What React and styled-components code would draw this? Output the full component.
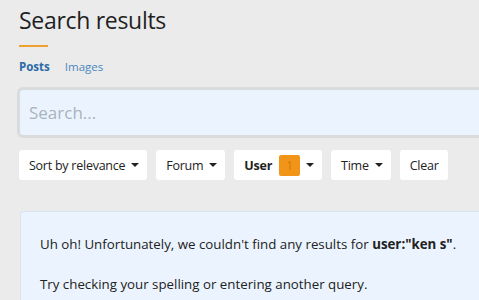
import React from "react";
import styled, { createGlobalStyle } from "styled-components";

const GlobalStyle = createGlobalStyle`
  html, body {
    margin: 0;
    background: #ebebeb;
    font-family: "Open Sans", "Noto Sans", sans-serif;
    overflow: hidden;
  }
`;

const Page = styled.div`
  padding: 4px 0 0 19px;
  width: 479px;
  height: 300px;
  box-sizing: border-box;
  overflow: hidden;
`;

const Title = styled.h1`
  margin: 0;
  font-weight: 400;
  font-size: 23px;
  letter-spacing: -0.3px;
  color: #1f1f1f;
  line-height: 32px;
`;

const Accent = styled.div`
  width: 29px;
  height: 2px;
  background: #f0a030;
  margin-top: 9px;
`;

const Tabs = styled.div`
  display: flex;
  gap: 15px;
  margin-top: 12px;
  font-size: 11.5px;
  line-height: 16px;
`;

const Tab = styled.span`
  color: ${(p) => (p.$active ? "#2c6aa8" : "#4a87c0")};
  font-weight: ${(p) => (p.$active ? 700 : 400)};
`;

const SearchBox = styled.div`
  margin: 12px 0 0 -2px;
  width: 480px;
  height: 51px;
  box-sizing: border-box;
  border: 3px solid #d9dbdc;
  border-right: none;
  border-radius: 6px 0 0 6px;
  background: #ebf4fe;
  display: flex;
  align-items: center;
  padding-left: 9px;
  font-size: 17px;
  color: #a8b3bf;
`;

const Filters = styled.div`
  display: flex;
  gap: 9px;
  margin-top: 12px;
`;

const FilterButton = styled.div`
  display: flex;
  flex-shrink: 0;
  align-items: center;
  gap: 6px;
  height: 30px;
  padding: 0 ${(p) => (p.$caret ? "8px" : "9px")} 0 10px;
  background: #fff;
  border-radius: 3px;
  font-size: 12.5px;
  letter-spacing: -0.25px;
  white-space: nowrap;
  color: #222;
  font-weight: ${(p) => (p.$bold ? 700 : 400)};
  box-sizing: border-box;
`;

const Caret = styled.span`
  width: 0;
  height: 0;
  border-left: 4px solid transparent;
  border-right: 4px solid transparent;
  border-top: 4px solid #222;
`;

const Badge = styled.span`
  display: inline-flex;
  align-items: center;
  justify-content: center;
  width: 21px;
  height: 21px;
  border-radius: 2px;
  background: #f29418;
  color: #d17a10;
  font-size: 12px;
  font-weight: 400;
  margin: 0 0 0 1px;
`;

const Notice = styled.div`
  margin-top: 31px;
  margin-left: 1px;
  width: 470px;
  height: 100px;
  box-sizing: border-box;
  background: #ebf4fe;
  border: 1px solid #dbe4ee;
  border-right: none;
  border-radius: 4px 0 0 4px;
  padding: 22px 0 0 19px;
  font-size: 13.3px;
  color: #222;
  line-height: 20px;
`;

const Line = styled.p`
  margin: 0 0 20px;
  white-space: nowrap;
`;

const filters = [
  { label: "Sort by relevance", caret: true },
  { label: "Forum", caret: true },
  { label: "User", caret: true, bold: true, badge: "1" },
  { label: "Time", caret: true },
  { label: "Clear" },
];

export default function App() {
  return (
    <>
      <GlobalStyle />
      <Page>
        <Title>Search results</Title>
        <Accent />
        <Tabs>
          <Tab $active>Posts</Tab>
          <Tab>Images</Tab>
        </Tabs>
        <SearchBox>Search...</SearchBox>
        <Filters>
          {filters.map((f) => (
            <FilterButton key={f.label} $bold={f.bold} $caret={f.caret}>
              {f.label}
              {f.badge && <Badge>{f.badge}</Badge>}
              {f.caret && <Caret />}
            </FilterButton>
          ))}
        </Filters>
        <Notice>
          <Line>
            Uh oh! Unfortunately, we couldn't find any results for{" "}
            <b>user:"ken s"</b>.
          </Line>
          <Line>Try checking your spelling or entering another query.</Line>
        </Notice>
      </Page>
    </>
  );
}
